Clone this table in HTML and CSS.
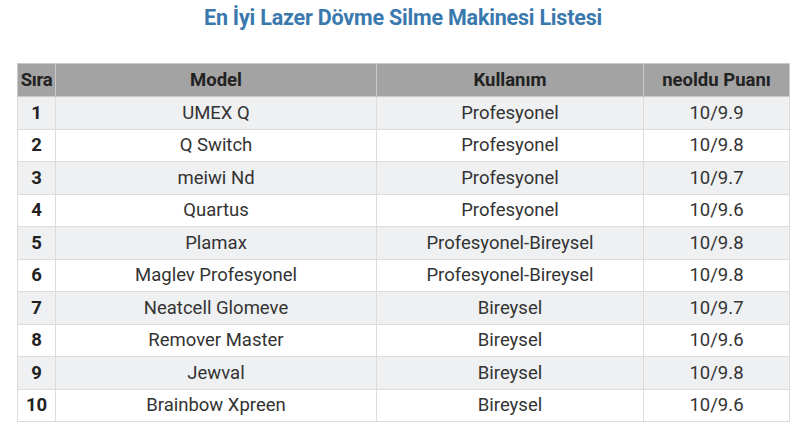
FILE: index.html
```html
<!DOCTYPE html>
<html lang="tr">
<head>
<meta charset="utf-8">
<link rel="stylesheet" href="styles.css">
</head>
<body>
<h2 class="title">En İyi Lazer Dövme Silme Makinesi Listesi</h2>
<table class="list">
  <colgroup>
    <col class="c-rank"><col class="c-model"><col class="c-use"><col class="c-score">
  </colgroup>
  <thead>
    <tr><th>Sıra</th><th>Model</th><th>Kullanım</th><th>neoldu Puanı</th></tr>
  </thead>
  <tbody>
    <tr><td class="rank">1</td><td>UMEX Q</td><td>Profesyonel</td><td>10/9.9</td></tr>
    <tr><td class="rank">2</td><td>Q Switch</td><td>Profesyonel</td><td>10/9.8</td></tr>
    <tr><td class="rank">3</td><td>meiwi Nd</td><td>Profesyonel</td><td>10/9.7</td></tr>
    <tr><td class="rank">4</td><td>Quartus</td><td>Profesyonel</td><td>10/9.6</td></tr>
    <tr><td class="rank">5</td><td>Plamax</td><td>Profesyonel-Bireysel</td><td>10/9.8</td></tr>
    <tr><td class="rank">6</td><td>Maglev Profesyonel</td><td>Profesyonel-Bireysel</td><td>10/9.8</td></tr>
    <tr><td class="rank">7</td><td>Neatcell Glomeve</td><td>Bireysel</td><td>10/9.7</td></tr>
    <tr><td class="rank">8</td><td>Remover Master</td><td>Bireysel</td><td>10/9.6</td></tr>
    <tr><td class="rank">9</td><td>Jewval</td><td>Bireysel</td><td>10/9.8</td></tr>
    <tr><td class="rank">10</td><td>Brainbow Xpreen</td><td>Bireysel</td><td>10/9.6</td></tr>
  </tbody>
</table>
</body>
</html>
```
FILE: styles.css
```css
* { box-sizing: border-box; }
html, body { margin: 0; padding: 0; background: #fff; }
body {
  font-family: Roboto, "Liberation Sans", Arial, sans-serif;
  color: #333;
  padding: 4px 11px 0 17px;
}
.title {
  margin: 0;
  text-align: center;
  font-size: 21.5px;
  font-weight: 700;
  line-height: 28px;
  color: #3a79ad;
  letter-spacing: -0.2px;
}
.list {
  margin-top: 31px;
  width: 772px;
  border-collapse: collapse;
  table-layout: fixed;
  font-size: 18.5px;
}
.c-rank { width: 38px; }
.c-model { width: 321px; }
.c-use { width: 267px; }
.c-score { width: 146px; }
.list th, .list td {
  border: 1px solid #dcdcdc;
  text-align: center;
  padding: 0;
  white-space: nowrap;
}
.list th {
  background: #a3a3a3;
  color: #222;
  font-weight: 700;
  height: 33px;
  border-color: #c9c9c9;
}
.list th:first-child { letter-spacing: -0.3px; }
.list td {
  height: 32.5px;
  color: #333;
}
.list tbody tr:nth-child(odd) td { background: #eef0f2; }
.list tbody tr:nth-child(even) td { background: #fff; }
.list td.rank { font-weight: 700; color: #222; }
```
